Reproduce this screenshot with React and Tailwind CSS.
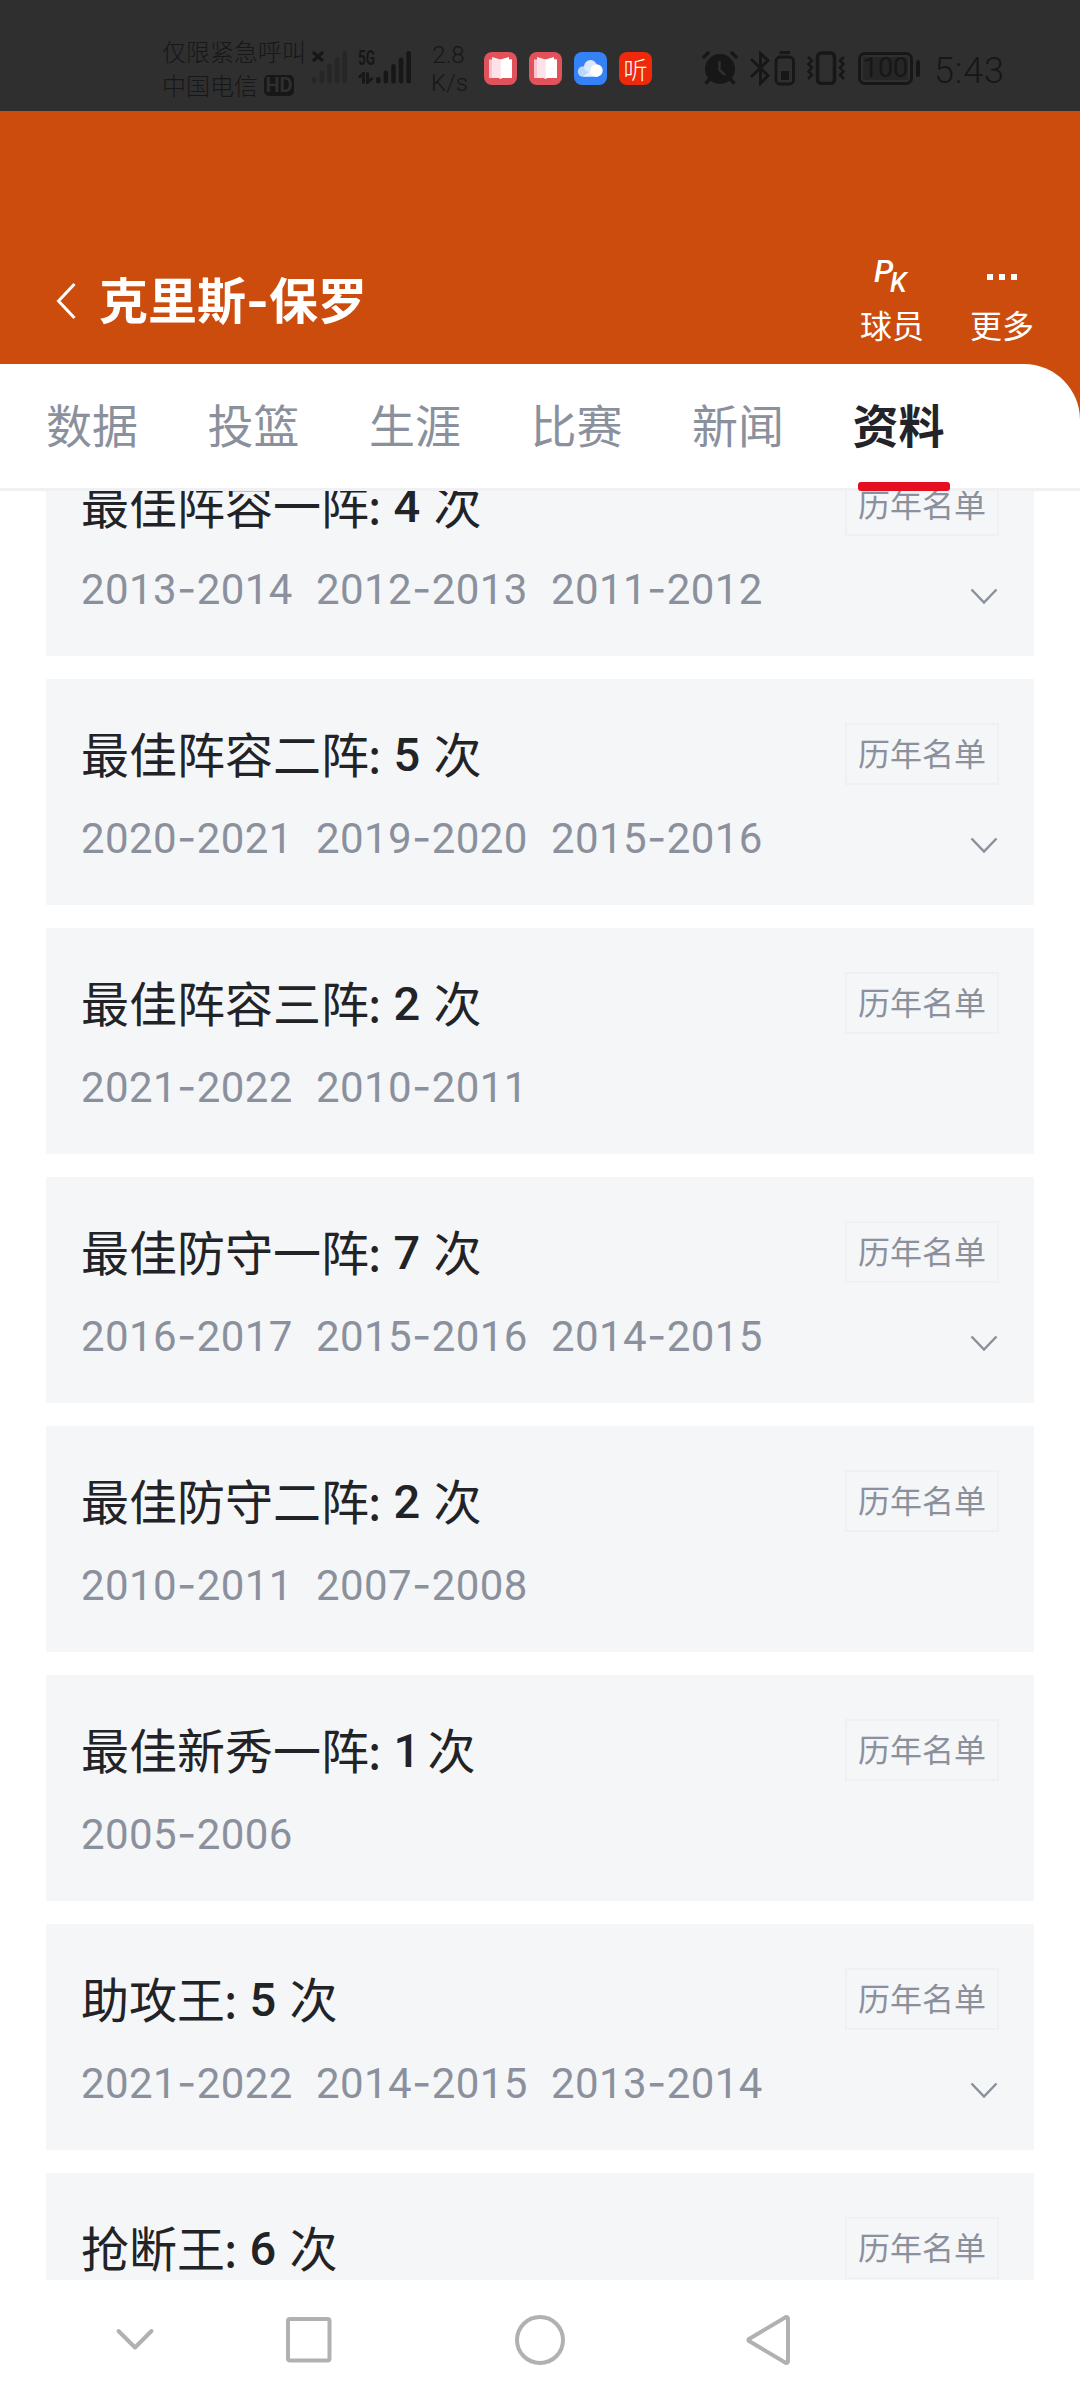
import { Fragment } from "react";

const tabs = ["数据", "投篮", "生涯", "比赛", "新闻", "资料"];

const honors = [
  { name: "最佳阵容一阵", count: 4, seasons: ["2013-2014", "2012-2013", "2011-2012"], more: true },
  { name: "最佳阵容二阵", count: 5, seasons: ["2020-2021", "2019-2020", "2015-2016"], more: true },
  { name: "最佳阵容三阵", count: 2, seasons: ["2021-2022", "2010-2011"] },
  { name: "最佳防守一阵", count: 7, seasons: ["2016-2017", "2015-2016", "2014-2015"], more: true },
  { name: "最佳防守二阵", count: 2, seasons: ["2010-2011", "2007-2008"] },
  { name: "最佳新秀一阵", count: 1, seasons: ["2005-2006"] },
  { name: "助攻王", count: 5, seasons: ["2021-2022", "2014-2015", "2013-2014"], more: true },
  { name: "抢断王", count: 6, seasons: [] },
];

function SignalBars({ className }) {
  return (
    <svg viewBox="0 0 35 33" className={className} fill="currentColor">
      <rect x="0" y="26" width="4.6" height="6.5" rx="2.3" />
      <rect x="7.6" y="19.5" width="4.6" height="13" rx="2.3" />
      <rect x="15.2" y="13" width="4.6" height="19.5" rx="2.3" />
      <rect x="22.8" y="6.5" width="4.6" height="26" rx="2.3" />
      <rect x="30.4" y="0" width="4.6" height="32.5" rx="2.3" />
    </svg>
  );
}

function BookIcon() {
  return (
    <svg viewBox="0 0 33 33" className="h-[33px] w-[33px]">
      <rect width="33" height="33" rx="8" fill="#e2525b" />
      <path d="M5 7.5h23V26H18l-1.5 1-1.5-1H5z" fill="#fbc3cb" />
      <path d="M8 5l8.5 2.5V27L15 26H8z" fill="#fde3e8" />
      <path d="M16.5 7.5L25 5v2.5h3V26H18l-1.5 1z" fill="#fff" />
    </svg>
  );
}

function CloudIcon() {
  return (
    <svg viewBox="0 0 33 33" className="h-[33px] w-[33px]">
      <rect width="33" height="33" rx="8" fill="#3482f5" />
      <circle cx="9" cy="19.5" r="5.2" fill="#bcd7fc" />
      <circle cx="16.5" cy="14.5" r="6.5" fill="#d9e8fe" />
      <path d="M9 24.7l12-10 3 10z" fill="#e6f0ff" />
      <circle cx="22.5" cy="18.5" r="6.2" fill="#fff" />
    </svg>
  );
}

function StatusBar() {
  return (
    <div className="flex h-[111px] items-start bg-[#2f2f2f] pl-[162px] text-[#171717]">
      <div className="mt-[34px] w-[150px] text-[24px] font-light leading-[34px]">
        <div className="whitespace-nowrap">仅限紧急呼叫</div>
        <div className="flex items-center">
          中国电信
          <span className="ml-[6px] flex h-[21px] w-[30px] items-center justify-center rounded-[5px] bg-[#171717] font-['Roboto'] text-[20px] font-bold leading-none text-[#2f2f2f]">
            HD
          </span>
        </div>
      </div>
      <div className="relative mt-[51px] h-[33px] w-[46px]">
        <SignalBars className="h-[33px] w-[35px] text-[#262626]" />
        <svg viewBox="0 0 12 10" className="absolute left-0 top-0 h-[11px] w-[12px]" stroke="currentColor" strokeWidth="3.2">
          <path d="M1 0.5l10 9M11 0.5l-10 9" />
        </svg>
      </div>
      <div className="mt-[51px] flex h-[33px] w-[18px] flex-col justify-between">
        <span className="origin-left scale-x-[0.68] font-['Roboto'] text-[20px] font-bold leading-[15px]">5G</span>
        <svg viewBox="0 0 18 11" className="h-[12px] w-[18px]" stroke="currentColor" strokeWidth="3" fill="none">
          <path d="M1 5l4.5-4v10M9.5 0v10l5-4.5" />
        </svg>
      </div>
      <SignalBars className="mt-[51px] h-[33px] w-[35px]" />
      <div className="ml-[20px] mt-[41px] w-[35px] text-center font-['Roboto'] text-[24px] font-light leading-[28px]">
        <div>2.8</div>
        <div>K/s</div>
      </div>
      <div className="ml-[18px] mt-[52px] flex gap-[12px]">
        <BookIcon />
        <BookIcon />
        <CloudIcon />
        <span className="flex h-[33px] w-[33px] items-center justify-center rounded-[8px] bg-[#ee2a0a] text-[24px] font-light leading-[29px] text-white">
          听
        </span>
      </div>
      <svg viewBox="0 0 36 34" className="ml-[50px] mt-[51px] h-[34px] w-[36px]" fill="none" stroke="currentColor" strokeWidth="3.5" strokeLinecap="round">
        <circle cx="18" cy="18" r="15" fill="currentColor" stroke="none" />
        <path d="M2 6l4-4M34 6l-4-4M4.5 31.5l4-4M31.5 31.5l-4-4" />
        <path d="M17.5 11v8l5 4.5" stroke="#2f2f2f" strokeWidth="2.5" />
      </svg>
      <svg viewBox="0 0 46 35" className="ml-[11px] mt-[51px] h-[35px] w-[46px]" fill="none" stroke="currentColor" strokeWidth="2.8">
        <path d="M2 8l17 16.5-7.5 8V2.5l7.5 7L2 26" />
        <rect x="27" y="6" width="17.5" height="27" rx="4" />
        <path d="M30.5 1.5h10.5" />
        <rect x="32" y="20" width="8" height="9" fill="currentColor" stroke="none" />
      </svg>
      <svg viewBox="0 0 40 34" className="ml-[11px] mt-[51px] h-[34px] w-[40px]" fill="none" stroke="currentColor" strokeWidth="3.5">
        <rect x="11.5" y="2" width="17" height="30.5" rx="4" />
        <path d="M2 6l4 3.5-3.5 3.5 3.5 3.5-3.5 4 3.5 3.5-4 4M38 6l-4 3.5 3.5 3.5-3.5 3.5 3.5 4-3.5 3.5 4 4" strokeWidth="2.5" />
      </svg>
      <div className="ml-[12px] mt-[52px] flex items-center">
        <span className="flex h-[33px] w-[55px] items-center justify-center rounded-[7px] border-[3px] border-[#171717] font-['Roboto'] text-[27px] leading-none">
          <span className="bg-[#262626] leading-[23px]">100</span>
        </span>
        <span className="ml-[3px] h-[17px] w-[4px] rounded-[2px] bg-[#171717]" />
      </div>
      <span className="ml-[14px] mt-[51px] font-['Roboto'] text-[36px] font-light leading-[40px] tracking-[0.8px]">5:43</span>
    </div>
  );
}

function PageHeader() {
  return (
    <div className="flex h-[253px] items-start bg-[#cb4c0d] text-white">
      <svg viewBox="0 0 20 38" className="ml-[56px] mt-[171px] h-[38px] w-[20px]" fill="none" stroke="currentColor" strokeWidth="3">
        <path d="M18.5 2L2.5 19l16 17" />
      </svg>
      <h1 className="ml-[23px] mt-[157px] flex-1 text-[49px] font-bold leading-[60px]">
        克里斯<span className="font-['Inter']">-</span>保罗
      </h1>
      <div className="mt-[142px] flex w-[64px] flex-col items-center">
        <div className="flex h-[50px] w-[40px] pl-[2px] font-['Roboto'] font-medium italic">
          <span className="mt-[4px] w-[16px] text-[31px] leading-[30px]">P</span>
          <span className="mt-[15px] text-[27px] leading-[30px]">K</span>
        </div>
        <span className="text-[32px] leading-[42px]">球员</span>
      </div>
      <div className="ml-[46px] mr-[46px] mt-[142px] flex w-[64px] flex-col items-center">
        <div className="flex h-[50px] gap-[6px] pt-[21px]">
          <span className="h-[6px] w-[6px] bg-white" />
          <span className="h-[6px] w-[6px] bg-white" />
          <span className="h-[6px] w-[6px] bg-white" />
        </div>
        <span className="text-[32px] leading-[42px]">更多</span>
      </div>
    </div>
  );
}

function TabBar() {
  return (
    <div className="bg-[#cb4c0d]">
      <div className="flex h-[127px] gap-[69.5px] rounded-tr-[56px] border-b-[3px] border-[#f1f1f3] bg-white pl-[46px]">
        {tabs.map((tab, i) => (
          <div key={tab} className="relative w-[92px] pt-[29px] text-[46px] leading-[60px]">
            {i === tabs.length - 1 ? (
              <>
                <span className="-ml-[1px] font-bold text-[#222429]">{tab}</span>
                <div className="absolute -bottom-[3px] left-[4px] h-[9px] w-[92px] rounded-[3px] bg-[#e60f22]" />
              </>
            ) : (
              <span className="text-[#8b909d]">{tab}</span>
            )}
          </div>
        ))}
      </div>
    </div>
  );
}

function HonorCard({ honor }) {
  return (
    <div className="h-[226px] shrink-0 bg-[#f5f6f8] px-[35px] pt-[44px]">
      <div className="flex items-start justify-between">
        <div className="-mt-[1px] flex text-[48px] leading-[60px] text-[#222327]">
          {honor.name}
          <span className="-ml-[1px]">:</span>
          <span className="w-[52px] pl-[12px] pt-[3px] font-['Roboto'] text-[47px] font-medium">{honor.count}</span>
          <span className={honor.count === 1 ? "-ml-[6px]" : ""}>次</span>
        </div>
        <button className="h-[62px] w-[154px] border-2 border-[#eff0f2] pb-[4px] text-[32px] leading-[54px] text-[#8b909d]">
          历年名单
        </button>
      </div>
      <div className="mt-[20px] flex items-start justify-between">
        <div className="flex pt-[5px] font-['Roboto'] text-[42px] leading-[56px] tracking-[0.4px] text-[#8b909d]">
          {honor.seasons.map((season) => (
            <span key={season} className="w-[235px]">
              {season.split("-").map((year, i) => (
                <Fragment key={i}>
                  {i > 0 && <span className="font-['Inter']">-</span>}
                  {year}
                </Fragment>
              ))}
            </span>
          ))}
        </div>
        {honor.more && (
          <svg viewBox="0 0 28 17" className="mr-[1px] mt-[32px] h-[17px] w-[28px]" fill="none" stroke="#8b909d" strokeWidth="2.5">
            <path d="M1.5 1.5L14 14.5 26.5 1.5" />
          </svg>
        )}
      </div>
    </div>
  );
}

function NavBar() {
  return (
    <div className="h-[120px] bg-white pl-[115px]">
      <svg viewBox="0 0 680 120" className="h-[120px] w-[680px]" fill="none" stroke="#b1b1b1" strokeWidth="4" strokeLinecap="round" strokeLinejoin="round">
        <path d="M3.5 51l16.5 16.5L36.5 51" />
        <rect x="173" y="39" width="41.5" height="41.5" rx="2" />
        <circle cx="425" cy="60" r="23" />
        <path d="M634 59q-1 1 0 2l37 22q2 0 2-2V39q0-2-2-2z" />
      </svg>
    </div>
  );
}

export default function App() {
  return (
    <div className="flex h-[2400px] w-[1080px] flex-col overflow-hidden bg-white font-['Noto_Sans_CJK_SC',sans-serif]">
      <StatusBar />
      <PageHeader />
      <TabBar />
      <div className="flex-1 overflow-hidden px-[46px]">
        <div className="-mt-[61px] flex flex-col gap-[23px]">
          {honors.map((honor) => (
            <HonorCard key={honor.name} honor={honor} />
          ))}
        </div>
      </div>
      <NavBar />
    </div>
  );
}
